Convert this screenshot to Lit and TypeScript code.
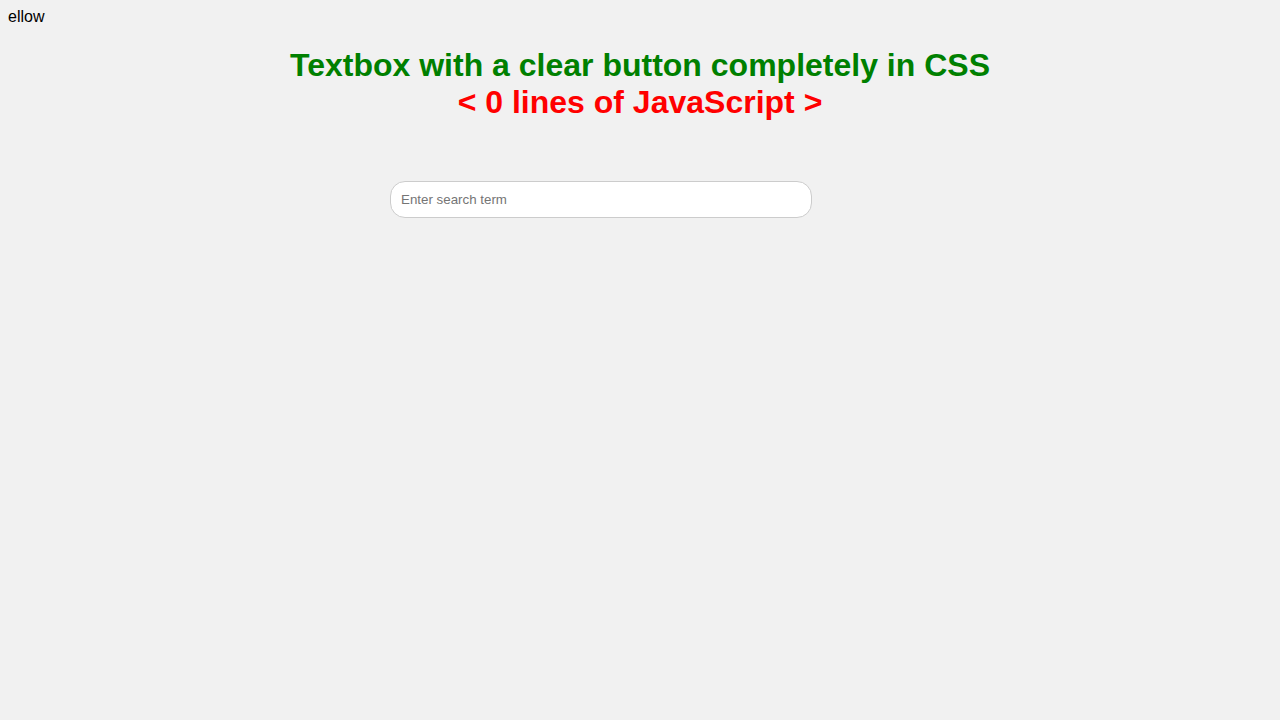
import { LitElement, html, css } from 'lit';
import { customElement, state } from 'lit/decorators.js';

@customElement('app-root')
export class AppRoot extends LitElement {
  @state() private term = '';

  static styles = css`
    :host {
      display: block;
      box-sizing: border-box;
      min-height: 100vh;
      padding: 8px;
      background: #f1f1f1;
      color: #000;
      font-family: 'Liberation Sans', Arial, sans-serif;
      font-size: 16px;
      line-height: 18px;
    }

    h1 {
      margin: 21px 0 0;
      font-size: 32px;
      line-height: 37px;
      text-align: center;
      color: green;
    }

    .tagline {
      color: red;
    }

    .search-form {
      display: flex;
      max-width: 500px;
      margin: 60px auto 0;
    }

    .search-box {
      box-sizing: border-box;
      width: 422px;
      min-width: 0;
      padding: 10px;
      border: 1px solid #ccc;
      border-radius: 15px;
      outline: 0;
      background: #fff;
      font-family: inherit;
    }

    .close-icon {
      padding: 0 8px;
      border: 0;
      background: transparent;
      color: #fa9595;
      font-size: 16px;
      cursor: pointer;
    }

    /* nothing to clear while the placeholder is showing */
    .search-box:placeholder-shown ~ .close-icon {
      display: none;
    }
  `;

  render() {
    return html`
      <div>ellow</div>
      <h1>
        Textbox with a clear button completely in CSS<br />
        <span class="tagline">&lt; 0 lines of JavaScript &gt;</span>
      </h1>
      <form class="search-form" @submit=${(e: Event) => e.preventDefault()}>
        <input
          class="search-box"
          type="text"
          placeholder="Enter search term"
          aria-label="Enter search term"
          .value=${this.term}
          @input=${(e: Event) => (this.term = (e.target as HTMLInputElement).value)}
        />
        <button class="close-icon" type="reset" aria-label="Clear" @click=${() => (this.term = '')}>×</button>
      </form>
    `;
  }
}
